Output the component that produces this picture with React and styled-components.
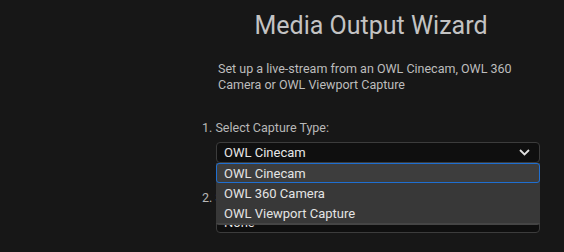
import styled, { createGlobalStyle } from "styled-components";

const GlobalStyle = createGlobalStyle`
  html, body {
    margin: 0;
    padding: 0;
    background: #171717;
  }
  body {
    font-family: Roboto, "Liberation Sans", sans-serif;
    width: 564px;
    height: 252px;
    overflow: hidden;
  }
`;

const Page = styled.div`
  width: 338px;
  padding: 9px 0 0 202px;
  display: flex;
  flex-direction: column;
`;

const Title = styled.h1`
  margin: 0;
  font-size: 25px;
  font-weight: 400;
  line-height: 34px;
  color: #c3c3c3;
  text-align: center;
`;

const Desc = styled.p`
  margin: 18px 0 0 16px;
  font-size: 12.5px;
  line-height: 16px;
  color: #bdbdbd;
`;

const Step = styled.div`
  display: flex;
  flex-direction: column;
  gap: 6px;
  margin-top: ${(p) => p.$top}px;
`;

const Label = styled.div`
  font-size: 12.5px;
  line-height: 16px;
  color: #b8b8b8;
`;

const ComboWrap = styled.div`
  position: relative;
  margin-left: 14px;
`;

const Combo = styled.div`
  height: 21px;
  box-sizing: border-box;
  border: 1px solid #3c3c3c;
  border-radius: 4px;
  background: #0f0f0f;
  display: flex;
  align-items: center;
  justify-content: space-between;
  padding: 0 9px 0 7px;
  font-size: 13px;
  color: #e6e6e6;
`;

const List = styled.div`
  position: absolute;
  left: 0;
  right: 0;
  top: 21px;
  z-index: 2;
  background: #383838;
  border-radius: 0 0 3px 3px;
  border-bottom: 2px solid #454545;
  display: flex;
  flex-direction: column;
`;

const Item = styled.div`
  height: 20px;
  box-sizing: border-box;
  display: flex;
  align-items: center;
  padding: 0 7px;
  font-size: 13px;
  color: #e4e4e4;
  background: ${(p) => (p.$active ? "#3d3d3d" : "#383838")};
  border: 1px solid ${(p) => (p.$active ? "#1f6fd1" : "transparent")};
  border-radius: ${(p) => (p.$active ? "3px" : "0")};
`;

const Chevron = () => (
  <svg width="11" height="7" viewBox="0 0 11 7">
    <path d="M1 1 L5.5 5.5 L10 1" fill="none" stroke="#e0e0e0" strokeWidth="1.8" />
  </svg>
);

const options = ["OWL Cinecam", "OWL 360 Camera", "OWL Viewport Capture"];

export default function App() {
  return (
    <>
      <GlobalStyle />
      <Page>
        <Title>Media Output Wizard</Title>
        <Desc>
          Set up a live-stream from an OWL Cinecam, OWL 360
          <br />
          Camera or OWL Viewport Capture
        </Desc>
        <Step $top={27}>
          <Label>1. Select Capture Type:</Label>
          <ComboWrap>
            <Combo>
              OWL Cinecam
              <Chevron />
            </Combo>
            <List>
              {options.map((o, i) => (
                <Item key={o} $active={i === 0}>
                  {o}
                </Item>
              ))}
            </List>
          </ComboWrap>
        </Step>
        <Step $top={27}>
          <Label>2. Select Output Source:</Label>
          <ComboWrap>
            <Combo>None</Combo>
          </ComboWrap>
        </Step>
      </Page>
    </>
  );
}
